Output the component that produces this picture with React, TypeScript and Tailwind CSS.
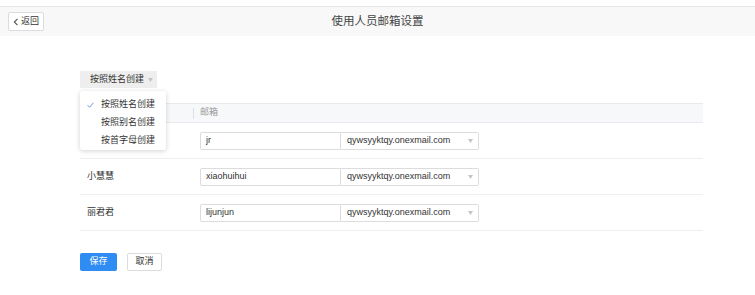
import React from "react";

type Row = {
  name: string;
  account: string;
  domain: string;
};

const rows: Row[] = [
  { name: "", account: "jr", domain: "qywsyyktqy.onexmail.com" },
  { name: "小慧慧", account: "xiaohuihui", domain: "qywsyyktqy.onexmail.com" },
  { name: "丽君君", account: "lijunjun", domain: "qywsyyktqy.onexmail.com" },
];

const modes = ["按照姓名创建", "按照别名创建", "按首字母创建"];

function Caret() {
  return (
    <svg width="5" height="4" viewBox="0 0 5 4" className="fill-[#c4c4c4]">
      <path d="M0 0h5L2.5 4z" />
    </svg>
  );
}

export default function App() {
  return (
    <div className="h-[295px] w-[755px] overflow-hidden bg-white font-['Liberation_Sans','Noto_Sans_CJK_SC',sans-serif] text-[9px] text-[#333]">
      <div className="mt-[6px] flex h-[30px] items-center border-t border-[#e6e6e6] bg-[#f8f8f8] px-[8px]">
        <button className="flex h-[19px] w-[36px] items-center justify-center gap-[2px] rounded-[2px] border border-[#dcdcdc] bg-white text-[9px] text-[#333]">
          <svg width="6" height="8" viewBox="0 0 6 8" className="fill-none stroke-[#555]">
            <path d="M4.5 0.8L1.3 4l3.2 3.2" strokeWidth="1.1" />
          </svg>
          返回
        </button>
        <div className="flex-1 pr-[36px] text-center text-[11.5px] text-[#444]">使用人员邮箱设置</div>
      </div>

      <div className="pl-[80px] pr-[52px]">
        <div className="relative mt-[35px]">
          <div className="flex h-[17px] w-[77px] items-center justify-between bg-[#eeeeee] pl-[10px] pr-[4px] text-[#333]">
            <span>按照姓名创建</span>
            <Caret />
          </div>

          <div className="absolute left-0 top-[20px] z-10 w-[86px] rounded-[3px] bg-white pt-[5px] shadow-[0_1px_5px_rgba(0,0,0,0.18)]">
            {modes.map((m, i) => (
              <div key={m} className="flex h-[18px] items-center pl-[7px]">
                <span className="w-[14px]">
                  {i === 0 ? (
                    <svg width="7" height="6" viewBox="0 0 7 6" className="fill-none stroke-[#5b8fd9]">
                      <path d="M0.6 3.2l2 2L6.4 0.8" strokeWidth="0.9" />
                    </svg>
                  ) : null}
                </span>
                <span className="text-[#333]">{m}</span>
              </div>
            ))}
          </div>
        </div>

        <div className="mt-[15px] w-[623px]">
          <div className="flex h-[20px] items-center border-y border-[#e8eaee] bg-[#f7f8fa] text-[#999]">
            <div className="w-[113px]" />
            <div className="h-[11px] border-l border-[#dcdfe6]" />
            <div className="pl-[6px]">邮箱</div>
          </div>
          {rows.map((r) => (
            <div key={r.account} className="flex h-[36px] items-center border-b border-[#eeeeee]">
              <div className="w-[120px] pl-[7px] text-[#333]">{r.name}</div>
              <div className="flex h-[18px] items-center">
                <div className="flex h-full w-[141px] items-center rounded-l-[2px] border border-[#dcdcdc] pl-[5px] text-[#333]">
                  {r.account}
                </div>
                <div className="flex h-full w-[138px] items-center justify-between rounded-r-[2px] border border-l-0 border-[#dcdcdc] pl-[6px] pr-[5px] text-[#333]">
                  <span>{r.domain}</span>
                  <Caret />
                </div>
              </div>
            </div>
          ))}
        </div>

        <div className="mt-[22px] flex gap-[10px]">
          <button className="flex h-[18px] w-[37px] items-center justify-center rounded-[2px] bg-[#2f8cf2] text-[9px] text-white">
            保存
          </button>
          <button className="flex h-[18px] w-[35px] items-center justify-center rounded-[2px] border border-[#dcdcdc] bg-white text-[9px] text-[#333]">
            取消
          </button>
        </div>
      </div>
    </div>
  );
}
